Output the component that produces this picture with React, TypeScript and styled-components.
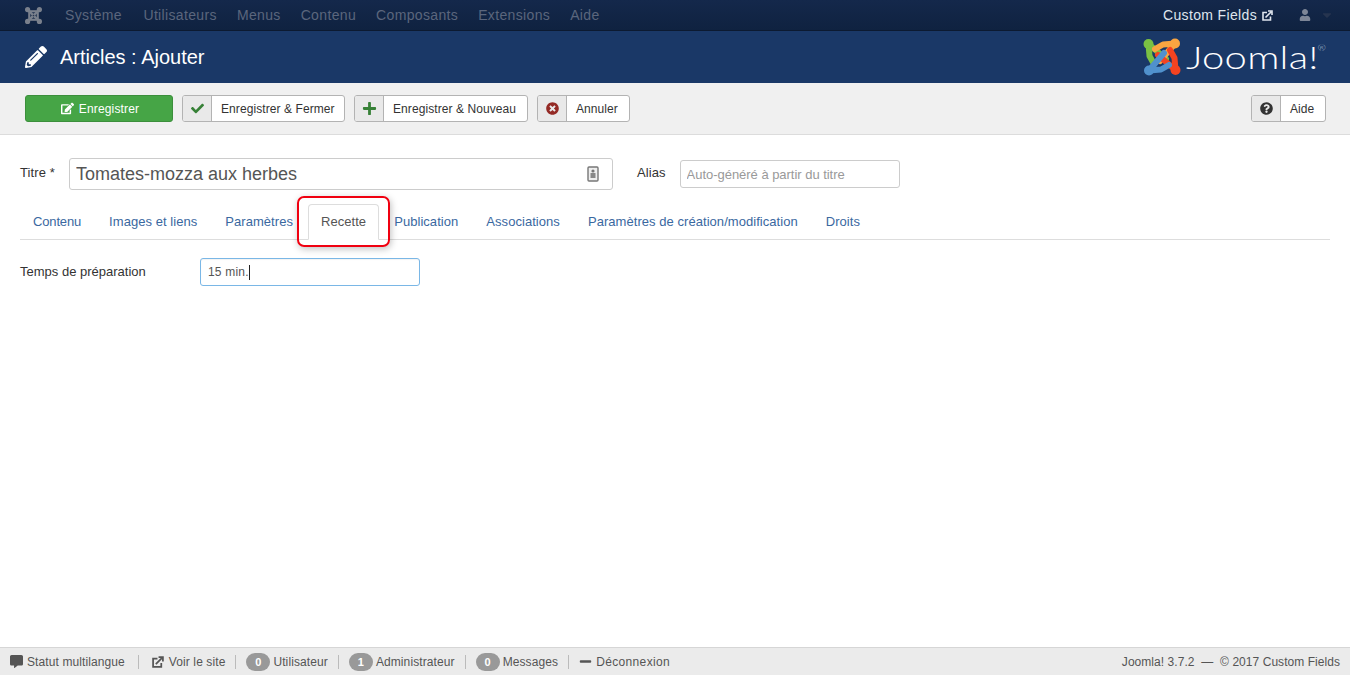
import React from "react";
import styled, { createGlobalStyle } from "styled-components";
import { FaPencilAlt, FaCheck, FaPlus, FaTimesCircle, FaQuestionCircle, FaUser, FaCommentAlt, FaMinus, FaEdit, FaCaretDown } from "react-icons/fa";

const Global = createGlobalStyle`
  html, body { margin: 0; padding: 0; height: 100%; background: #fff; }
  body { font-family: "Liberation Sans", Arial, sans-serif; font-size: 13px; color: #333; overflow: hidden; }
  * { box-sizing: border-box; }
`;

const Page = styled.div`
  display: flex; flex-direction: column; height: 675px; width: 1350px;
`;
const Navbar = styled.nav`
  display: flex; align-items: center; height: 31px; flex: none;
  padding: 0 16px 0 25px;
  background: linear-gradient(#14284b, #0f2240);
  border-bottom: 1px solid #0c1a31;
`;
const NavLogo = styled.svg`
  width: 17px; height: 17px; margin-right: 23px; flex: none;
`;
const NavItem = styled.span`
  font-size: 14px; color: #5b667d; margin-right: 20px; letter-spacing: .35px;
  &:nth-of-type(1) { margin-right: 21.5px; }
`;
const NavRight = styled.div`
  margin-left: auto; display: flex; align-items: center; color: #dfe5ee; font-size: 14px; letter-spacing: .35px;
`;
const NavUser = styled.span`
  display: flex; align-items: center; color: #7d8697; margin-left: 26px; font-size: 12px; gap: 9px;
`;
const NavCaret = styled.span`
  display: flex; color: #26344f; font-size: 14px;
`;
const ExtIcon = styled.svg<{ $ml?: number; $size?: number }>`
  width: ${(p) => p.$size ?? 11}px; height: ${(p) => p.$size ?? 11}px; margin-left: ${(p) => p.$ml ?? 0}px; flex: none;
`;
const Header = styled.header`
  display: flex; align-items: center; height: 52px; flex: none; padding: 0 24px 0 25px;
  background: #1a3867; color: #fff;
`;
const PageTitle = styled.h1`
  display: flex; align-items: center; gap: 13px; margin: 0; font-size: 20px; font-weight: 400;
  svg { font-size: 22px; }
`;
const Brand = styled.div`
  margin-left: auto; display: flex; align-items: center;
`;
const BrandMark = styled.svg`
  width: 38px; height: 38px; flex: none;
`;
const BrandWord = styled.span`
  display: inline-block; margin-left: 33px; transform: scaleX(1.25); transform-origin: right center;
  font-family: "Lato", sans-serif; font-weight: 300; font-size: 32px; color: #fff; line-height: 1; letter-spacing: .2px;
  sup { font-size: 8px; vertical-align: 18px; color: #b8c3d4; line-height: 0; margin-left: -1px; }
`;
const Toolbar = styled.div`
  display: flex; align-items: center; gap: 9px; height: 52px; flex: none; padding: 0 24px 0 25px;
  background: #f0f0f0; border-bottom: 1px solid #dcdcdc;
`;
const GreenButton = styled.div`
  display: flex; align-items: center; justify-content: center; gap: 5px; width: 148px; height: 27px; padding-left: 2px;
  background: #46a546; border: 1px solid #3c8f3c; border-radius: 3px; color: #fff; font-size: 12px; letter-spacing: .15px;
  svg { font-size: 13px; }
`;
const Button = styled.div<{ $right?: boolean; $width: number }>`
  display: flex; align-items: stretch; height: 27px; width: ${(p) => p.$width}px; background: #fff;
  border: 1px solid #b3b3b3; border-radius: 3px; font-size: 12px; color: #333;
  margin-left: ${(p) => (p.$right ? "auto" : "0")};
`;
const ButtonIcon = styled.span<{ $color: string; $size?: number }>`
  display: flex; align-items: center; justify-content: center; width: 29px; flex: none;
  background: #e9e9e9; border-right: 1px solid #b3b3b3; color: ${(p) => p.$color}; font-size: ${(p) => p.$size ?? 13}px; border-radius: 2px 0 0 2px;
`;
const ButtonLabel = styled.span`
  display: flex; align-items: center; padding-left: 9px; letter-spacing: .08px; white-space: nowrap;
`;
const Main = styled.main`
  flex: 1; padding: 23px 20px 0;
`;
const TitleRow = styled.div`
  display: flex; align-items: center; height: 32px;
`;
const FieldLabel = styled.label`
  font-size: 13px; color: #333; letter-spacing: .1px; padding-bottom: 3px;
`;
const TitleField = styled.div`
  position: relative; width: 544px; margin-left: 14px; margin-right: 24px;
`;
const TitleInput = styled.input`
  display: block; width: 100%; height: 32px; padding: 0 6px; font: 18px "Liberation Sans", Arial, sans-serif; color: #555;
  border: 1px solid #ccc; border-radius: 3px; outline: none; background: #fff;
`;
const KeyIcon = styled.svg`
  position: absolute; right: 14px; top: 8px; width: 12px; height: 16px;
`;
const AliasInput = styled.input`
  width: 220px; height: 28px; margin-left: 14px; padding: 0 6px; font: 13px "Liberation Sans", Arial, sans-serif;
  border: 1px solid #ccc; border-radius: 3px; outline: none; letter-spacing: -.03px;
  &::placeholder { color: #999; opacity: 1; }
`;
const Tabs = styled.div`
  display: flex; margin-top: 14px; border-bottom: 1px solid #ddd; height: 36px;
`;
const Tab = styled.div<{ $active?: boolean }>`
  position: relative; height: 36px; padding: 8px 12px; margin-right: 2px; line-height: 18px; font-size: 13px; white-space: nowrap;
  letter-spacing: .05px;
  border: 1px solid ${(p) => (p.$active ? "#ddd" : "transparent")};
  border-bottom-color: ${(p) => (p.$active ? "#fff" : "transparent")};
  border-radius: 4px 4px 0 0;
  background: ${(p) => (p.$active ? "#fff" : "transparent")};
  color: ${(p) => (p.$active ? "#555" : "#3a689f")};
  &:first-child { letter-spacing: -.15px; }
`;
const Highlight = styled.span`
  position: absolute; left: -12px; top: -9px; width: 93px; height: 51px; pointer-events: none;
  border: 2px solid #f00010; border-radius: 7px; box-shadow: 1px 2px 7px rgba(0,0,0,.25);
`;
const FieldRow = styled.div`
  display: flex; align-items: center; margin-top: 18px; height: 28px;
`;
const FieldName = styled.label`
  width: 180px; flex: none; font-size: 13px; color: #333; padding-bottom: 2px;
`;
const FocusField = styled.div`
  display: flex; align-items: center; width: 220px; height: 28px; padding: 0 7px; font-size: 12px; color: #555;
  border: 1px solid #7ab7e6; border-radius: 3px; box-shadow: inset 0 1px 1px rgba(0,0,0,.05); letter-spacing: .2px;
`;
const Caret = styled.span`
  width: 1px; height: 15px; background: #222;
`;
const Footer = styled.footer`
  display: flex; align-items: center; height: 28px; flex: none; padding: 0 10px;
  background: #ebebeb; border-top: 1px solid #d6d6d6; font-size: 12px; color: #555; letter-spacing: .1px;
`;
const Status = styled.span<{ $gap?: number; $spread?: boolean }>`
  display: flex; align-items: center; gap: ${(p) => p.$gap ?? 4}px; white-space: nowrap;
  letter-spacing: ${(p) => (p.$spread ? ".35px" : "inherit")};
  svg { color: #555; font-size: 13px; }
`;
const Sep = styled.span<{ $wide?: boolean }>`
  width: 1px; height: 14px; background: #bbb; margin: 0 ${(p) => (p.$wide ? 13 : 10)}px;
`;
const Badge = styled.span`
  display: inline-flex; align-items: center; justify-content: center; width: 24px; height: 18px; border-radius: 9px;
  background: #999; color: #fff; font-size: 11px; font-weight: 700;
`;
const Copy = styled.span`
  margin-left: auto; letter-spacing: .05px;
`;

function JoomlaMark() {
  const pieces = [
    { c: "#7ac143", r: 0 },
    { c: "#f9a541", r: 90 },
    { c: "#f44321", r: 180 },
    { c: "#5091cd", r: 270 },
  ];
  return (
    <>
      {pieces.map((p) => (
        <g key={p.r} transform={`rotate(${p.r})`} fill="none" strokeLinecap="round" strokeLinejoin="round">
          <path d="M-8,7 L-12.5,-1 L-13.5,-13 L4,2" stroke={p.c} strokeWidth={6} />
          <circle cx="-13.5" cy="-13" r="5" fill={p.c} />
        </g>
      ))}
    </>
  );
}

function JoomlaGlyph() {
  const corners = [[-12.5, -12.5], [12.5, -12.5], [12.5, 12.5], [-12.5, 12.5]];
  return (
    <>
      <rect x="-9" y="-9" width="18" height="18" fill="none" stroke="#7a808c" strokeWidth="4.5" />
      <path d="M-12,-12L12,12M12,-12L-12,12" stroke="#7a808c" strokeWidth="5" />
      {corners.map(([x, y]) => <circle key={`${x}${y}`} cx={x} cy={y} r="5.5" fill="#7a808c" />)}
      <circle r="1.8" fill="#2a3650" />
    </>
  );
}

const menu = ["Système", "Utilisateurs", "Menus", "Contenu", "Composants", "Extensions", "Aide"];
const tabs = ["Contenu", "Images et liens", "Paramètres", "Recette", "Publication", "Associations", "Paramètres de création/modification", "Droits"];

const External = ({ color, ml, size }: { color: string; ml?: number; size?: number }) => (
  <ExtIcon $ml={ml} $size={size} viewBox="0 0 11 11" fill="none" stroke={color}>
    <path d="M8.5 6.5V10H1V2.5H5" strokeWidth="1.6" />
    <path d="M3.5 7.5L9 2M6 1H10V5" strokeWidth="1.6" />
  </ExtIcon>
);

export default function App() {
  return (
    <Page>
      <Global />
      <Navbar>
        <NavLogo viewBox="-18 -18 36 36"><JoomlaGlyph /></NavLogo>
        {menu.map((m) => <NavItem key={m}>{m}</NavItem>)}
        <NavRight>
          Custom Fields <External color="#dfe5ee" ml={5} />
          <NavUser><FaUser /><NavCaret><FaCaretDown /></NavCaret></NavUser>
        </NavRight>
      </Navbar>
      <Header>
        <PageTitle><FaPencilAlt />Articles : Ajouter</PageTitle>
        <Brand>
          <BrandMark viewBox="-19 -19 38 38"><JoomlaMark /></BrandMark>
          <BrandWord>Joomla!<sup>®</sup></BrandWord>
        </Brand>
      </Header>
      <Toolbar>
        <GreenButton><FaEdit />Enregistrer</GreenButton>
        <Button $width={163}><ButtonIcon $color="#378137"><FaCheck /></ButtonIcon><ButtonLabel>Enregistrer &amp; Fermer</ButtonLabel></Button>
        <Button $width={174}><ButtonIcon $color="#378137" $size={15}><FaPlus /></ButtonIcon><ButtonLabel>Enregistrer &amp; Nouveau</ButtonLabel></Button>
        <Button $width={93}><ButtonIcon $color="#942a25"><FaTimesCircle /></ButtonIcon><ButtonLabel>Annuler</ButtonLabel></Button>
        <Button $right $width={75}><ButtonIcon $color="#333"><FaQuestionCircle /></ButtonIcon><ButtonLabel>Aide</ButtonLabel></Button>
      </Toolbar>
      <Main>
        <TitleRow>
          <FieldLabel>Titre *</FieldLabel>
          <TitleField>
            <TitleInput readOnly value="Tomates-mozza aux herbes" />
            <KeyIcon viewBox="0 0 12 16">
              <rect x="1" y="1" width="10" height="14" rx="1" fill="#eee" stroke="#777" strokeWidth="1.4" />
              <circle cx="6" cy="5" r="1.6" fill="#777" />
              <rect x="3.5" y="7" width="5" height="5" fill="#888" />
            </KeyIcon>
          </TitleField>
          <FieldLabel>Alias</FieldLabel>
          <AliasInput readOnly placeholder="Auto-généré à partir du titre" />
        </TitleRow>
        <Tabs>
          {tabs.map((t) => (
            <Tab key={t} $active={t === "Recette"}>
              {t}
              {t === "Recette" && <Highlight />}
            </Tab>
          ))}
        </Tabs>
        <FieldRow>
          <FieldName>Temps de préparation</FieldName>
          <FocusField>15 min.<Caret /></FocusField>
        </FieldRow>
      </Main>
      <Footer>
        <Status><FaCommentAlt />Statut multilangue</Status><Sep $wide />
        <Status $gap={5}><External color="#555" size={12} />Voir le site</Status><Sep />
        <Status $gap={3}><Badge>0</Badge>Utilisateur</Status><Sep />
        <Status $gap={3}><Badge>1</Badge>Administrateur</Status><Sep />
        <Status $gap={3}><Badge>0</Badge>Messages</Status><Sep />
        <Status $spread><FaMinus />Déconnexion</Status>
        <Copy>Joomla! 3.7.2 &nbsp;—&nbsp; © 2017 Custom Fields</Copy>
      </Footer>
    </Page>
  );
}
